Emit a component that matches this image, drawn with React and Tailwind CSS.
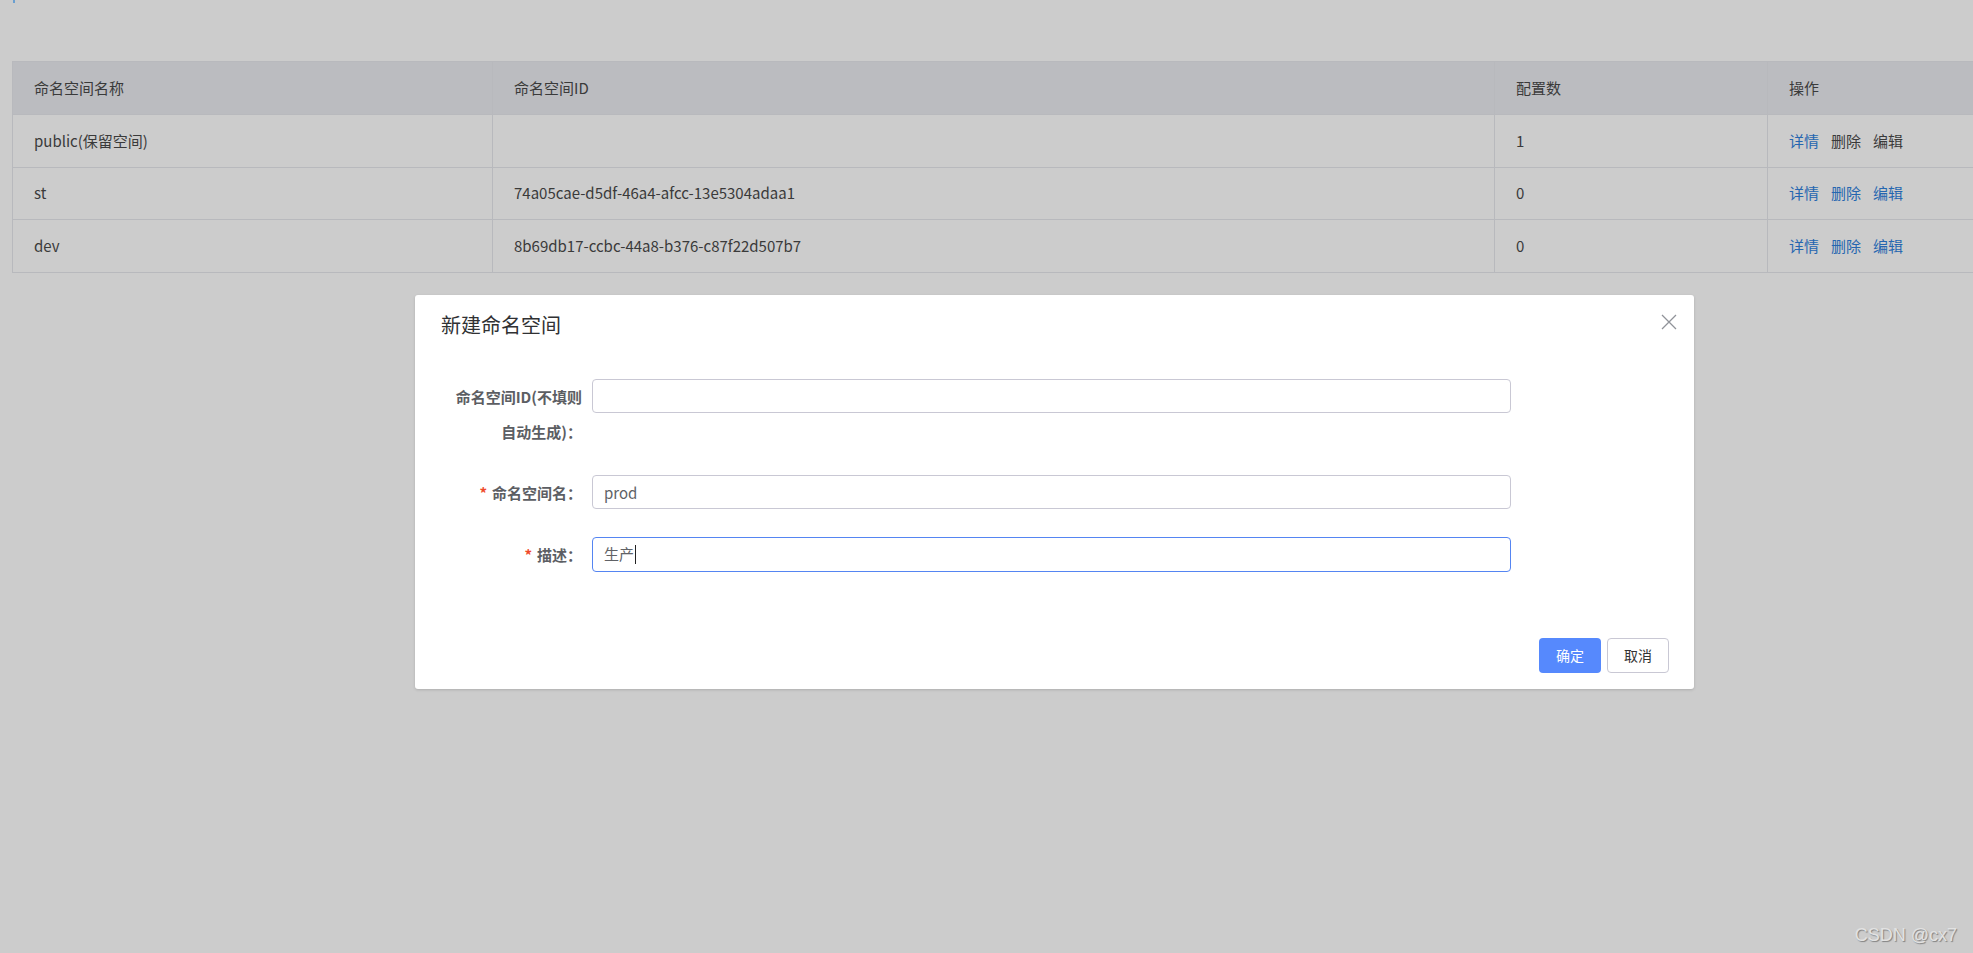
const rows = [
  { name: 'public(保留空间)', id: '', count: '1', reserved: true },
  { name: 'st', id: '74a05cae-d5df-46a4-afcc-13e5304adaa1', count: '0' },
  { name: 'dev', id: '8b69db17-ccbc-44a8-b376-c87f22d507b7', count: '0' },
];

const cell = 'flex items-center pl-[21px] border-r border-b border-[#b8b9bd]';

const Label = ({ required, children }) => (
  <div className="w-[152px] shrink-0 pr-[10px] text-right text-[15px] font-bold leading-[35px] text-[#5c5e63] whitespace-nowrap">
    {required && <span className="text-[#ef4a2a] mr-[5px]">*</span>}
    {children}
  </div>
);

export default function App() {
  return (
    <div
      className="relative min-h-[953px] w-full bg-[#cccccc] overflow-hidden"
      style={{ fontFamily: '"Noto Sans CJK SC", "Noto Sans", sans-serif' }}
    >
      {/* tiny mark at top-left */}
      <span className="absolute left-[13px] top-0 w-[2px] h-[3px] bg-[#6a9fd0]"></span>

      {/* Table */}
      <div className="pt-[61px] pl-[12px]">
        <div className="grid grid-cols-[480px_1002px_273px_1fr] border-t border-l border-[#b8b9bd] text-[15px] text-[#3a3a3a]">
          <div className={`${cell} h-[53px] bg-[#bbbcc0]`}>命名空间名称</div>
          <div className={`${cell} h-[53px] bg-[#bbbcc0]`}>命名空间ID</div>
          <div className={`${cell} h-[53px] bg-[#bbbcc0]`}>配置数</div>
          <div className="flex items-center pl-[21px] border-b border-[#b8b9bd] h-[53px] bg-[#bbbcc0]">操作</div>

          {rows.map((r, i) => (
            <div key={r.name} className="contents">
              <div className={`${cell} ${i === 1 ? 'h-[52px]' : 'h-[53px]'}`}>{r.name}</div>
              <div className={`${cell} ${i === 1 ? 'h-[52px]' : 'h-[53px]'}`}>{r.id}</div>
              <div className={`${cell} ${i === 1 ? 'h-[52px]' : 'h-[53px]'}`}>{r.count}</div>
              <div className={`flex items-center gap-[12px] pl-[21px] border-b border-[#b8b9bd] ${i === 1 ? 'h-[52px]' : 'h-[53px]'}`}>
                <span className="text-[#2566b0]">详情</span>
                <span className={r.reserved ? 'text-[#3a3a3a]' : 'text-[#2566b0]'}>删除</span>
                <span className={r.reserved ? 'text-[#3a3a3a]' : 'text-[#2566b0]'}>编辑</span>
              </div>
            </div>
          ))}
        </div>
      </div>

      {/* Dialog */}
      <div className="relative ml-[415px] mt-[22px] w-[1279px] h-[394px] bg-white rounded-[3px] shadow-[0_1px_3px_rgba(0,0,0,0.15)]">
        <div className="pt-[17px] pl-[26px] text-[20px] leading-[26px] text-[#303133]">新建命名空间</div>
        <svg className="absolute top-[19px] right-[17px]" width="16" height="16" viewBox="0 0 16 16">
          <path d="M1 1 L15 15 M15 1 L1 15" stroke="#909399" strokeWidth="1.3" fill="none" />
        </svg>

        <div className="pt-[41px] pl-[25px]">
          {/* item 1 */}
          <div className="flex items-start mb-[26px]">
            <Label>
              命名空间ID(不填则
              <br />
              自动生成)：
            </Label>
            <input
              readOnly
              className="w-[919px] h-[34px] border border-[#c9c8d4] rounded-[4px] px-[11px] text-[15px] text-[#606266] outline-none"
            />
          </div>
          {/* item 2 */}
          <div className="flex items-start mb-[27px]">
            <Label required>命名空间名：</Label>
            <input
              readOnly
              value="prod"
              className="w-[919px] h-[34px] border border-[#c9c8d4] rounded-[4px] px-[11px] text-[15px] text-[#606266] outline-none"
            />
          </div>
          {/* item 3 */}
          <div className="flex items-start">
            <Label required>描述：</Label>
            <div className="w-[919px] h-[35px] border border-[#5585f2] rounded-[4px] px-[11px] flex items-center text-[15px] text-[#606266]">
              生产
              <span className="inline-block w-[1px] h-[19px] bg-[#222] ml-[1px]"></span>
            </div>
          </div>
        </div>

        <div className="absolute right-[25px] bottom-[16px] flex gap-[6px]">
          <button className="w-[62px] h-[35px] rounded-[4px] bg-[#5689fd] text-white text-[14px]">确定</button>
          <button className="w-[62px] h-[35px] rounded-[4px] border border-[#c9c8d4] bg-white text-[#333] text-[14px]">取消</button>
        </div>
      </div>

      {/* Watermark */}
      <div
        className="absolute right-[16px] bottom-[7px] text-[18px] leading-[21px] text-[#e2e2e2] [text-shadow:1px_1px_1px_#808080]"
        style={{ fontFamily: '"Liberation Sans", Arial, sans-serif' }}
      >
        CSDN @cx7
      </div>
    </div>
  );
}
